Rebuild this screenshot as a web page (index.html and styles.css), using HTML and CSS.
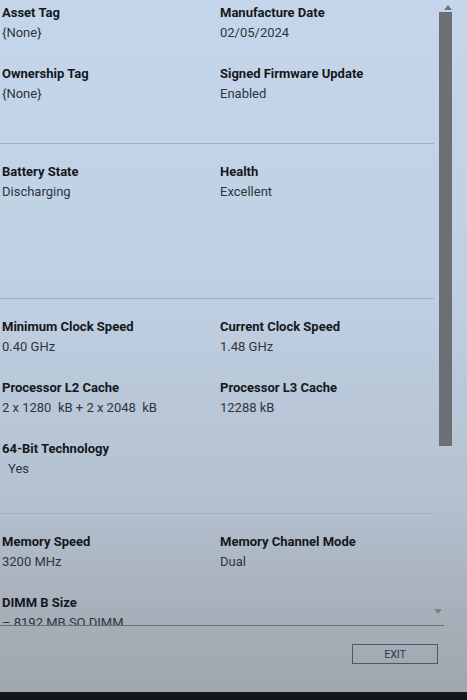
FILE: index.html
```html
<!DOCTYPE html>
<html lang="en">
<head>
    <meta charset="UTF-8">
    <meta name="viewport" content="width=device-width, initial-scale=1.0">
    <title>System Information</title>
    <link rel="stylesheet" href="styles.css">
</head>
<body>
    <div class="screen">
        <div class="panel">
            <div class="list">
                <section class="group group-first">
                    <div class="item">
                        <div class="label">Asset Tag</div>
                        <div class="value">{None}</div>
                    </div>
                    <div class="item item-right">
                        <div class="label">Manufacture Date</div>
                        <div class="value">02/05/2024</div>
                    </div>
                    <div class="item">
                        <div class="label">Ownership Tag</div>
                        <div class="value">{None}</div>
                    </div>
                    <div class="item item-right">
                        <div class="label">Signed Firmware Update</div>
                        <div class="value">Enabled</div>
                    </div>
                </section>

                <section class="group group-battery">
                    <div class="item">
                        <div class="label">Battery State</div>
                        <div class="value">Discharging</div>
                    </div>
                    <div class="item item-right">
                        <div class="label">Health</div>
                        <div class="value">Excellent</div>
                    </div>
                </section>

                <section class="group group-cpu">
                    <div class="item">
                        <div class="label">Minimum Clock Speed</div>
                        <div class="value">0.40 GHz</div>
                    </div>
                    <div class="item item-right">
                        <div class="label">Current Clock Speed</div>
                        <div class="value">1.48 GHz</div>
                    </div>
                    <div class="item">
                        <div class="label">Processor L2 Cache</div>
                        <div class="value">2 x 1280&nbsp; kB + 2 x 2048&nbsp; kB</div>
                    </div>
                    <div class="item item-right">
                        <div class="label">Processor L3 Cache</div>
                        <div class="value">12288 kB</div>
                    </div>
                    <div class="item">
                        <div class="label">64-Bit Technology</div>
                        <div class="value value-indent">Yes</div>
                    </div>
                </section>

                <section class="group group-memory">
                    <div class="item">
                        <div class="label">Memory Speed</div>
                        <div class="value">3200 MHz</div>
                    </div>
                    <div class="item item-right">
                        <div class="label">Memory Channel Mode</div>
                        <div class="value">Dual</div>
                    </div>
                    <div class="item">
                        <div class="label">DIMM B Size</div>
                        <div class="value">&ndash; 8192 MB SO DIMM</div>
                    </div>
                </section>
            </div>

            <div class="scrollbar">
                <span class="arrow arrow-up"></span>
                <div class="thumb"></div>
                <span class="arrow arrow-down"></span>
            </div>
        </div>

        <div class="rule"></div>

        <div class="footer">
            <button class="btn-exit">EXIT</button>
        </div>

        <div class="bezel"></div>
    </div>
</body>
</html>
```

FILE: styles.css
```css
* {
    margin: 0;
    padding: 0;
    box-sizing: border-box;
    font-family: Roboto, 'Liberation Sans', sans-serif;
}

body {
    width: 467px;
    height: 700px;
    overflow: hidden;
    background: #a6aeb6;
}

.screen {
    height: 700px;
    display: flex;
    flex-direction: column;
    background: linear-gradient(180deg, #c5d6ea 0%, #c0d0e3 40%, #b3c0cf 72%, #a5adb6 90%, #9ea6ae 100%);
}

.panel {
    height: 625px;
    display: flex;
    overflow: hidden;
}

.list {
    width: 434px;
    overflow: hidden;
}

.group {
    display: grid;
    grid-template-columns: 218px 1fr;
    row-gap: 21px;
    padding: 18px 0 36px 2px;
    border-bottom: 1px solid #9fb0c2;
}

.group-first {
    padding-top: 3px;
    padding-bottom: 39px;
}

.group-battery {
    height: 155px;
}

.group-cpu {
    padding-bottom: 34px;
}

.group-memory {
    border-bottom: none;
}

.item {
    height: 40px;
}

.label {
    font-size: 13px;
    font-weight: bold;
    line-height: 20px;
    color: #14181d;
}

.value {
    font-size: 13px;
    line-height: 20px;
    color: #2f353c;
}

.value-indent {
    padding-left: 6px;
}

/* scroll track on the right edge */
.scrollbar {
    width: 33px;
    display: flex;
    flex-direction: column;
}

.arrow {
    width: 0;
    height: 0;
    border-left: 4px solid transparent;
    border-right: 4px solid transparent;
}

.arrow-up {
    margin: 5px 0 0 10px;
    border-bottom: 5px solid #6c7278;
}

.thumb {
    width: 13px;
    height: 434px;
    margin: 2px 0 0 5px;
    background: #6c6f73;
}

.arrow-down {
    margin: auto 0 11px 0;
    border-top: 5px solid #7a8088;
}

.rule {
    width: 444px;
    height: 1px;
    background: #66707a;
}

.footer {
    height: 66px;
    display: flex;
    justify-content: flex-end;
    padding: 18px 29px 0 0;
}

.btn-exit {
    width: 86px;
    height: 20px;
    border: 1px solid #4c5866;
    background: transparent;
    color: #2c3b52;
    font-size: 11px;
    letter-spacing: -0.2px;
}

.bezel {
    height: 8px;
    background: #151617;
}
```
